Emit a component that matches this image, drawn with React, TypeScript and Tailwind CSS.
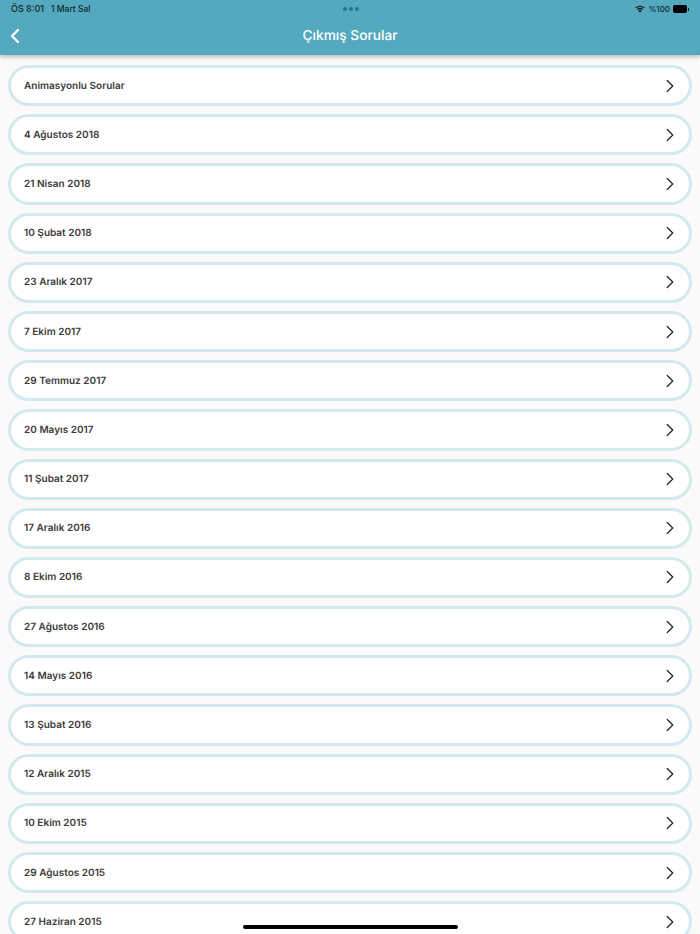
import { ChevronLeft, ChevronRight } from "lucide-react"

const exams = [
    "Animasyonlu Sorular",
    "4 Ağustos 2018",
    "21 Nisan 2018",
    "10 Şubat 2018",
    "23 Aralık 2017",
    "7 Ekim 2017",
    "29 Temmuz 2017",
    "20 Mayıs 2017",
    "11 Şubat 2017",
    "17 Aralık 2016",
    "8 Ekim 2016",
    "27 Ağustos 2016",
    "14 Mayıs 2016",
    "13 Şubat 2016",
    "12 Aralık 2015",
    "10 Ekim 2015",
    "29 Ağustos 2015",
    "27 Haziran 2015",
]

const StatusBar = () => {
    return (
        <div className="relative flex h-[17px] items-center justify-between px-[11px] pt-[1px] text-[9px] font-medium text-[#10252c]">
            <div className="flex items-center gap-[7px]">
                <span>ÖS 8:01</span>
                <span className="text-[8.500px]">1 Mart Sal</span>
            </div>
            <div className="absolute left-[343px] top-[7px] flex gap-[2px]">
                <span className="h-[4px] w-[4px] rounded-full bg-[#2f7488]"></span>
                <span className="h-[4px] w-[4px] rounded-full bg-[#2f7488]"></span>
                <span className="h-[4px] w-[4px] rounded-full bg-[#2f7488]"></span>
            </div>
            <div className="flex items-center gap-[3px]">
                <svg width="10" height="8" viewBox="0 0 22 16" fill="none" stroke="#0b1a1f" strokeWidth="2.6">
                    <path d="M1.5 5.5C7 .8 15 .8 20.5 5.5" />
                    <path d="M5 9c3.5-3 8.500-3 12 0" />
                    <path d="M8 12.500c1.800-1.500 4.200-1.500 6 0" />
                    <path d="M11 16l-2.500-3c1.500-1 3.500-1 5 0z" fill="#0b1a1f" stroke="none" />
                </svg>
                <span className="text-[8px]">%100</span>
                <div className="flex items-center">
                    <div className="h-[8px] w-[14px] rounded-[2px] bg-black"></div>
                    <div className="ml-[1px] h-[3px] w-[1px] bg-[#0b1a1f]"></div>
                </div>
            </div>
        </div>
    )
}

const ExamRow = ({ title }: { title: string }) => {
    return (
        <div className="flex h-[41.2px] shrink-0 items-center justify-between rounded-[21px] border-[3.500px] border-[#d2e9ee] bg-white pl-[13px] pr-[8px]">
            <span className="pt-[1px] text-[10px] font-semibold tracking-[0.01px] text-[#3b3b3b] [text-rendering:geometricPrecision]">{title}</span>
            <ChevronRight size={22} strokeWidth={1.300} className="text-[#222222]" />
        </div>
    )
}

const App = () => {
    return (
        <div className="relative h-[934px] w-[700px] overflow-hidden bg-[#fafafa] font-['Inter',sans-serif]">
            <header className="relative z-10 h-[55px] bg-[#54a9bf] shadow-[0_2px_4px_rgba(0,0,0,0.25)]">
                <StatusBar />
                <div className="relative flex h-[38px] items-center justify-center pt-[1px]">
                    <ChevronLeft size={24} strokeWidth={2.400} className="absolute left-[3px] top-[7px] text-white" />
                    <h1 className="text-[13.700px] font-medium text-white [text-rendering:geometricPrecision]">Çıkmış Sorular</h1>
                </div>
            </header>
            <div className="flex flex-col gap-[8px] px-[8px] pt-[10px]">
                {exams.map((exam) => (
                    <ExamRow key={exam} title={exam} />
                ))}
            </div>
            <div className="absolute bottom-[5px] left-[243px] h-[4px] w-[215px] rounded-full bg-black"></div>
        </div>
    )
}

export default App
